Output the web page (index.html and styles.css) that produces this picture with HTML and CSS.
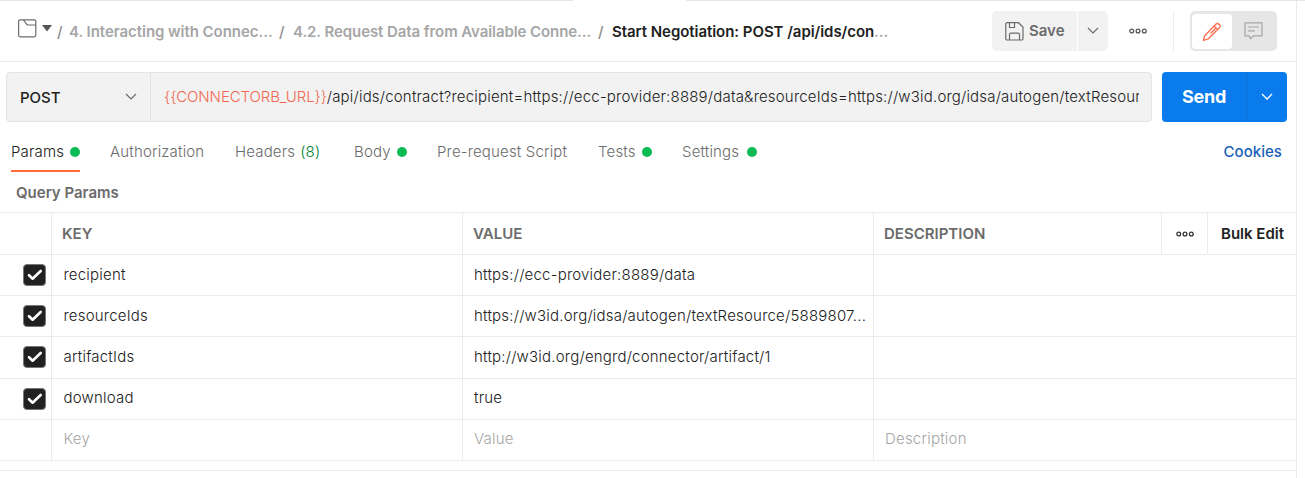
FILE: index.html
```html
<!DOCTYPE html>
<html lang="en">
<head>
<meta charset="utf-8">
<title>Request</title>
<link rel="stylesheet" href="styles.css">
</head>
<body>
<div class="tab-edge"><span class="edge edge-left"></span><span class="edge edge-right"></span></div>
<div class="app">
  <main class="panel">
    <header class="topbar">
      <svg class="folder" width="19" height="19" viewBox="0 0 19 19" fill="none" stroke="#6b6b6b" stroke-width="1.2"><rect x=".6" y=".8" width="17.2" height="17" rx="1.500"/><path d="M5.500 1l3.300 4.300q.5.700 1.500.700h7.500"/></svg>
      <svg class="caret" width="10" height="7" viewBox="0 0 10 7"><path d="M0 0h10L5 6.500z" fill="#555"/></svg>
      <nav class="crumbs">
        <span class="slash">/</span><span class="crumb c1">4. Interacting with Connec...</span>
        <span class="slash">/</span><span class="crumb c2">4.2. Request Data from Available Conne...</span>
        <span class="slash">/</span><span class="crumb current">Start Negotiation: POST /api/ids/con<span class="dim">...</span></span>
      </nav>
      <div class="actions">
        <button class="save"><svg width="19" height="19" viewBox="0 0 19 19" fill="none" stroke="#6b6b6b" stroke-width="1.200"><path d="M2 .7h11.500L18 5v11.800a1.200 1.200 0 0 1-1.200 1.200H2A1.200 1.200 0 0 1 .8 16.800V2A1.200 1.200 0 0 1 2 .7zM4.500.7v4.800h5V.7M4.500 18v-5.500q0-1.300 1.300-1.300h7.400q1.300 0 1.300 1.300V18"/></svg><span>Save</span></button>
        <button class="save-more"><svg width="12" height="8" viewBox="0 0 12 8" fill="none" stroke="#6b6b6b" stroke-width="1.200"><path d="M1 1l5 5 5-5"/></svg></button>
        <svg class="dots" width="18" height="6" viewBox="0 0 18 6" fill="none" stroke="#555" stroke-width="1.300"><circle cx="2.700" cy="3" r="1.900"/><circle cx="9" cy="3" r="1.900"/><circle cx="15.300" cy="3" r="1.900"/></svg>
        <span class="divider"></span>
        <div class="modes">
          <span class="mode on"><svg width="20" height="20" viewBox="0 0 20 20" fill="none" stroke="#ff6c4f" stroke-width="1.300" stroke-linejoin="round"><path d="M1.500 18.300l1-4.300L13.800 2.200q1.600-1.500 3.300 0l.3.300q1.500 1.700 0 3.300L5.800 17.200zM12 4l3.800 3.800M14.500 5.500L8.500 11.500"/></svg></span>
          <span class="mode"><svg width="19" height="18" viewBox="0 0 19 18" fill="none" stroke="#a6a6a6" stroke-width="1.200"><path d="M1 .8h17v13H9.500L6.500 16.700 5 13.800H1zM4 5h11M4 8.800h7"/></svg></span>
        </div>
      </div>
    </header>

    <section class="request">
      <div class="urlbox">
        <div class="method"><span class="verb">POST</span><svg width="12" height="8" viewBox="0 0 12 8" fill="none" stroke="#6b6b6b" stroke-width="1.200"><path d="M1 1l5 5 5-5"/></svg></div>
        <div class="url"><div class="url-text"><span class="var">{{CONNECTORB_URL}}</span>/api/ids/contract?recipient=https://ecc-provider:8889/data&amp;resourceIds=https://w3id.org/idsa/autogen/textResour</div></div>
      </div>
      <div class="send"><span class="send-label">Send</span><span class="send-more"><svg width="12" height="8" viewBox="0 0 12 8" fill="none" stroke="#fff" stroke-width="1.300"><path d="M1 1l5 5 5-5"/></svg></span></div>
    </section>

    <nav class="tabs">
      <span class="tab t-params active">Params<i></i></span>
      <span class="tab t-auth">Authorization</span>
      <span class="tab t-headers">Headers <b>(8)</b></span>
      <span class="tab t-body">Body<i></i></span>
      <span class="tab t-pre">Pre-request Script</span>
      <span class="tab t-tests">Tests<i></i></span>
      <span class="tab t-settings">Settings<i></i></span>
      <span class="cookies">Cookies</span>
    </nav>

    <h2 class="caption">Query Params</h2>

    <section class="table">
      <div class="row head">
        <span class="cell check"></span><span class="cell">KEY</span><span class="cell">VALUE</span><span class="cell last">DESCRIPTION</span>
        <span class="cell opts"><svg width="18" height="6" viewBox="0 0 18 6" fill="none" stroke="#333" stroke-width="1.300"><circle cx="2.700" cy="3" r="1.900"/><circle cx="9" cy="3" r="1.900"/><circle cx="15.300" cy="3" r="1.900"/></svg></span>
        <span class="cell bulk">Bulk Edit</span>
      </div>
      <div class="row">
        <span class="cell check"><span class="box"><svg width="16" height="12" viewBox="0 0 16 12"><path d="M2 6.200l3.600 3.500L13.700 2"/></svg></span></span><span class="cell">recipient</span><span class="cell">https://ecc-provider:8889/data</span><span class="cell wide"></span>
      </div>
      <div class="row">
        <span class="cell check"><span class="box"><svg width="16" height="12" viewBox="0 0 16 12"><path d="M2 6.200l3.600 3.500L13.700 2"/></svg></span></span><span class="cell">resourceIds</span><span class="cell">https://w3id.org/idsa/autogen/textResource/5889807...</span><span class="cell wide"></span>
      </div>
      <div class="row tall">
        <span class="cell check"><span class="box"><svg width="16" height="12" viewBox="0 0 16 12"><path d="M2 6.200l3.600 3.500L13.700 2"/></svg></span></span><span class="cell">artifactIds</span><span class="cell">http://w3id.org/engrd/connector/artifact/1</span><span class="cell wide"></span>
      </div>
      <div class="row raised">
        <span class="cell check"><span class="box"><svg width="16" height="12" viewBox="0 0 16 12"><path d="M2 6.200l3.600 3.500L13.700 2"/></svg></span></span><span class="cell">download</span><span class="cell">true</span><span class="cell wide"></span>
      </div>
      <div class="row raised blank">
        <span class="cell check"></span><span class="cell">Key</span><span class="cell">Value</span><span class="cell wide">Description</span>
      </div>
    </section>
    <div class="response-edge"></div>
  </main>
</div>
</body>
</html>
```
FILE: styles.css
```css
* { box-sizing: border-box; }
body { margin: 0; width: 1305px; height: 478px; overflow: hidden; background: #fff; color: #212121; font: 350 15px/20px Inter, sans-serif; }
svg { display: block; flex: none; }
button { border: 0; margin: 0; padding: 0; font: inherit; color: inherit; }
.tab-edge { display: flex; justify-content: space-between; height: 1px; }
.edge { height: 1px; background: #e6e6e6; }
.edge-left { width: 573px; }
.edge-right { width: 619px; }
.app { width: 1297px; height: 477px; border-right: 1px solid #ebebeb; }
.panel { display: flex; flex-direction: column; width: 1296px; }

.topbar { display: flex; align-items: flex-start; height: 61px; border-bottom: 1px solid #ebebeb; padding-left: 18px; }
.folder { margin-top: 18px; }
.caret { margin: 24px 0 0 5px; }
.crumbs { display: flex; margin: 21px 0 0 5px; font-weight: 600; color: #a6a6a6; white-space: nowrap; letter-spacing: -.05px; }
.slash { width: 12px; font-weight: 500; color: #8c8c8c; }
.crumb + .slash { width: 14px; }
.c2 + .slash { width: 13px; }
.c1 { width: 210px; }
.c2 { width: 305px; letter-spacing: -.08px; }
.current { padding-left: 1px; color: #212121; }
.dim { color: #a6a6a6; }
.actions { display: flex; align-items: center; height: 40px; margin: 10px 19px 0 auto; }
.save { display: flex; align-items: center; width: 85px; height: 40px; padding-left: 13px; gap: 5px; background: #f2f2f2; border-radius: 5px 0 0 5px; color: #6b6b6b; font-weight: 600; }
.save-more { display: flex; align-items: center; justify-content: center; width: 30px; height: 40px; margin-left: 1px; background: #f2f2f2; border-radius: 0 5px 5px 0; }
.dots { margin-left: 21px; }
.divider { width: 1px; height: 40px; margin: 0 16px 0 26px; background: #ebebeb; }
.modes { display: flex; width: 87px; height: 40px; padding: 3px 2px; background: #e6e6e6; border-radius: 5px; }
.mode { display: flex; align-items: center; justify-content: center; width: 42px; height: 34px; }
.mode.on { width: 40px; height: 35px; background: #fff; border-radius: 4px; }

.request { display: flex; padding: 10px 9px 0 6px; gap: 10px; }
.urlbox { display: flex; width: 1146px; height: 50px; background: #f2f2f2; border: 1px solid #e4e4e4; border-radius: 4px; }
.method { display: flex; align-items: center; justify-content: space-between; width: 144px; padding: 0 13px; border-right: 1px solid #e2e2e2; font-weight: 500; }
.verb { padding-top: 2px; }
.url { display: flex; align-items: center; width: 988px; padding-left: 13px; }
.url-text { overflow: hidden; white-space: nowrap; letter-spacing: .19px; }
.var { color: #f2674f; letter-spacing: -.11px; }
.send { display: flex; width: 125px; height: 50px; background: #097bed; color: #fff; border-radius: 4px; }
.send-label { width: 84px; font-size: 18px; font-weight: 700; line-height: 50px; text-align: center; letter-spacing: -.3px; }
.send-more { display: flex; align-items: center; justify-content: center; width: 41px; border-left: 1px solid #0870d8; }

.tabs { display: flex; height: 60px; padding: 20px 14px 0 11px; color: #6b6b6b; white-space: nowrap; letter-spacing: .16px; }
.tab { display: flex; align-items: center; height: 20px; }
.tab i { width: 10px; height: 10px; margin-left: auto; border-radius: 50%; background: #0cbb52; }
.tab b { margin-left: 5px; font-weight: inherit; color: #007f31; }
.t-params { width: 69px; height: 30px; margin-right: 30px; padding-bottom: 8px; border-bottom: 2px solid #ff6c37; }
.active { color: #212121; }
.t-auth { width: 125px; }
.t-headers { width: 119px; }
.t-body { width: 53px; margin-right: 30px; }
.t-pre { width: 161px; }
.t-tests { width: 54px; margin-right: 30px; }
.t-settings { width: 75px; }
.cookies { margin-left: auto; font-weight: 500; color: #1a5fb8; letter-spacing: .05px; }

.caption { height: 30px; margin: 0; padding: 1px 0 0 16px; font-size: 15px; line-height: 20px; font-weight: 600; color: #6b6b6b; }
.table { border-top: 1px solid #ebebeb; }
.row { display: flex; height: 41px; border-bottom: 1px solid #ebebeb; white-space: nowrap; letter-spacing: .21px; }
.head, .tall { height: 42px; }
.cell { width: 411px; padding-left: 11px; line-height: 40px; border-right: 1px solid #ebebeb; }
.raised .cell { line-height: 38px; }
.cell.check { width: 52px; padding: 9px 0 0 23px; }
.check + .cell { padding-left: 11.5px; }
.head { letter-spacing: 0; }
.head .cell { padding-left: 10px; line-height: 42px; font-weight: 600; color: #6b6b6b; }
.head .cell.last { width: 288px; }
.head .cell.opts { display: flex; align-items: center; width: 46px; padding-left: 14px; }
.head .cell.bulk { width: 88px; padding-left: 13px; border: 0; font-weight: 600; color: #212121; }
.cell.wide { width: 422px; border: 0; }
.box { display: flex; align-items: center; justify-content: center; width: 23px; height: 22px; background: #212121; border: 1px solid #777; border-radius: 4px; }
.box path { fill: none; stroke: #fff; stroke-width: 2.600; stroke-linecap: round; stroke-linejoin: round; }
.blank { color: #a6a6a6; }
.response-edge { height: 10px; border-bottom: 1px solid #ebebeb; }
```
